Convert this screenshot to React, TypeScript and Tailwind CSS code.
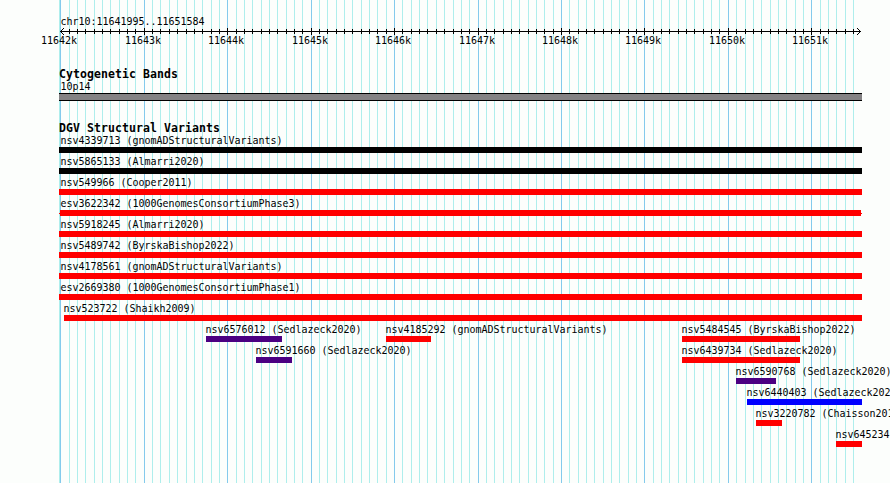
const FACE = "font-['DejaVu_Sans_Mono','Liberation_Mono',monospace]";
const TEXT = `${FACE} text-[10px] tracking-[-0.02px] whitespace-pre`;
const LABEL = `${TEXT} leading-[12px] origin-top-left scale-y-[1.1]`;
const HEADING = `${FACE} font-bold text-[11.5px] leading-[12px] tracking-[0.08px] whitespace-pre`;

const LINES = Array.from({ length: 96 }, (_, i) => ({
  x: Math.round(60.38 + i * 8.343),
  major: i % 10 === 0,
  name: `${11642 + i / 10}k`,
}));

type Variant = { name: string; x: number; end: number; color: string; thin?: boolean };

const RED = "bg-[#ff0000]";
const INDIGO = "bg-[#4b0082]";
const BLUE = "bg-[#0000ff]";
const BLACK = "bg-black";

const ROWS: Variant[][] = [
  [{ name: "nsv4339713 (gnomADStructuralVariants)", x: 59, end: 862, color: BLACK }],
  [{ name: "nsv5865133 (Almarri2020)", x: 59, end: 862, color: BLACK }],
  [{ name: "nsv549966 (Cooper2011)", x: 59, end: 862, color: RED }],
  [{ name: "esv3622342 (1000GenomesConsortiumPhase3)", x: 59, end: 862, color: RED, thin: true }],
  [{ name: "nsv5918245 (Almarri2020)", x: 59, end: 862, color: RED }],
  [{ name: "nsv5489742 (ByrskaBishop2022)", x: 59, end: 862, color: RED }],
  [{ name: "nsv4178561 (gnomADStructuralVariants)", x: 59, end: 862, color: RED }],
  [{ name: "esv2669380 (1000GenomesConsortiumPhase1)", x: 59, end: 862, color: RED }],
  [{ name: "nsv523722 (Shaikh2009)", x: 64, end: 862, color: RED }],
  [
    { name: "nsv6576012 (Sedlazeck2020)", x: 206, end: 282, color: INDIGO },
    { name: "nsv4185292 (gnomADStructuralVariants)", x: 386, end: 431, color: RED },
    { name: "nsv5484545 (ByrskaBishop2022)", x: 682, end: 800, color: RED },
  ],
  [
    { name: "nsv6591660 (Sedlazeck2020)", x: 256, end: 292, color: INDIGO },
    { name: "nsv6439734 (Sedlazeck2020)", x: 682, end: 800, color: RED },
  ],
  [{ name: "nsv6590768 (Sedlazeck2020)", x: 736, end: 776, color: INDIGO }],
  [{ name: "nsv6440403 (Sedlazeck2020)", x: 747, end: 862, color: BLUE }],
  [{ name: "nsv3220782 (Chaisson2019)", x: 756, end: 782, color: RED }],
  [{ name: "nsv645234", x: 836, end: 862, color: RED }],
];

function Grid() {
  return (
    <svg className="absolute inset-0" width="890" height="483" shapeRendering="crispEdges">
      <rect x="59" y="0" width="1" height="483" fill="#aeeeec" />
      {LINES.map((l) => (
        <rect key={l.x} x={l.x} y="0" width="1" height="483" fill={l.major ? "#84caec" : "#aeeeec"} />
      ))}
    </svg>
  );
}

function Axis() {
  return (
    <svg className="block" width="890" height="22" shapeRendering="crispEdges">
      <rect x="60" y="4" width="801" height="1" />
      {LINES.slice(1).map((l) => (
        <rect key={l.x} x={l.x} y={l.major ? 1 : 2} width="1" height={l.major ? 7 : 5} />
      ))}
      {[1, 2, 3].map((d) => (
        <g key={d}>
          <rect x={60 + d} y={4 - d} width="1" height="1" />
          <rect x={60 + d} y={4 + d} width="1" height="1" />
          <rect x={860 - d} y={4 - d} width="1" height="1" />
          <rect x={860 - d} y={4 + d} width="1" height="1" />
        </g>
      ))}
      {LINES.filter((l) => l.major).map((l) => (
        <text key={l.x} transform={`translate(${l.x - 19} 17) scale(1 1.1)`} className={TEXT}>
          {l.name}
        </text>
      ))}
    </svg>
  );
}

function VariantRow({ items }: { items: Variant[] }) {
  return (
    <div className="flex h-[21px] w-[890px]">
      {items.map((v, i) => {
        const from = i === 0 ? 0 : items[i - 1].end;
        return (
          <div key={v.name} className="shrink-0" style={{ marginLeft: v.x - from, width: v.end - v.x }}>
            <div className={`${LABEL} h-[13px] ${v.x === 59 ? "pl-[1.5px]" : "-ml-[0.5px]"}`}>{v.name}</div>
            {v.thin ? (
              <div className="flex items-center">
                <div className={`h-px w-px ${v.color}`} />
                <div className={`h-1.5 grow ${v.color}`} />
                <div className={`h-px w-px ${v.color}`} />
              </div>
            ) : (
              <div className={`h-1.5 ${v.color}`} />
            )}
          </div>
        );
      })}
    </div>
  );
}

export default function App() {
  return (
    <div className="relative h-[483px] w-[890px] overflow-hidden bg-[#fcfefc] text-black">
      <Grid />
      <div className="relative flex flex-col">
        <div className={`${LABEL} mt-[15px] ml-[60.5px] h-[12px]`}>chr10:11641995..11651584</div>
        <Axis />
        <div className={`${HEADING} mt-[19px] ml-[59px] h-[12px]`}>Cytogenetic Bands</div>
        <div className={`${LABEL} ml-[60.5px] h-[13px]`}>10p14</div>
        <div className="ml-[59px] h-2 w-[803px] border-y border-black bg-[#848284]" />
        <div className={`${HEADING} mt-[21px] ml-[59px] h-[12px]`}>DGV Structural Variants</div>
        <div className="flex flex-col">
          {ROWS.map((items) => (
            <VariantRow key={items[0].name} items={items} />
          ))}
        </div>
      </div>
    </div>
  );
}
